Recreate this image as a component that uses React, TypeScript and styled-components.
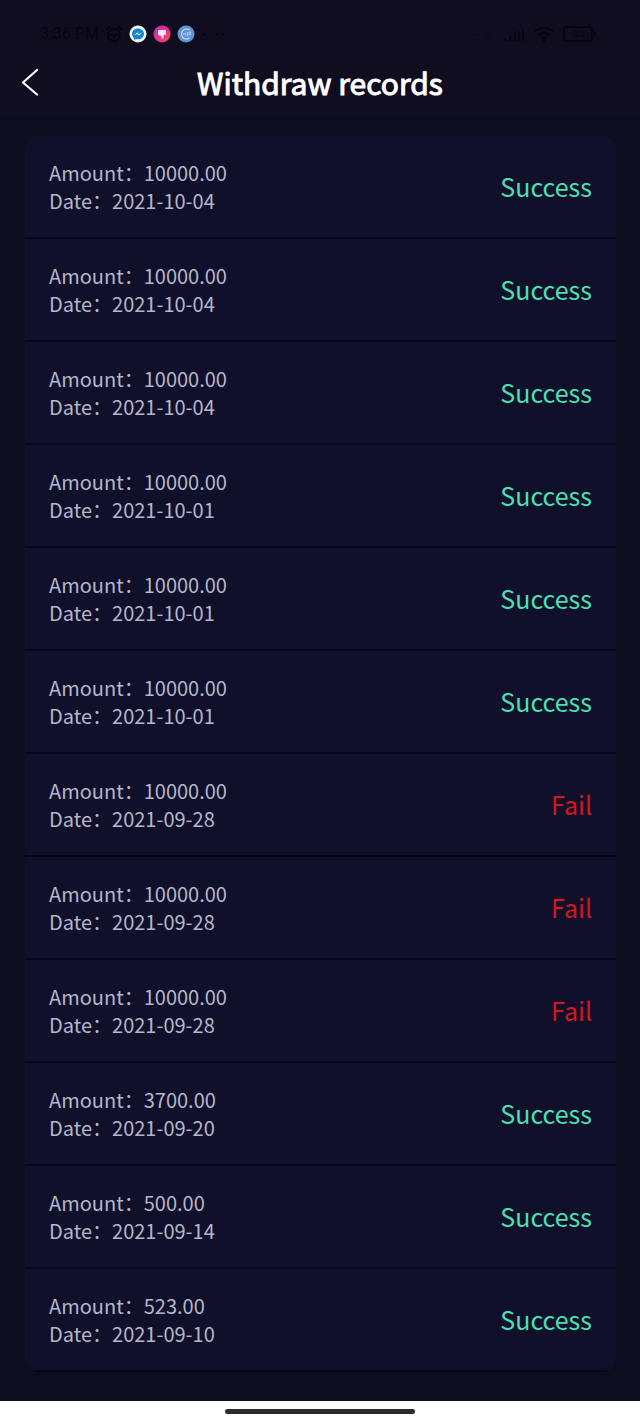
import React from "react";
import styled, { createGlobalStyle } from "styled-components";

type Status = "Success" | "Fail";

interface WithdrawRecord {
  amount: string;
  date: string;
  status: Status;
}

const records: WithdrawRecord[] = [
  { amount: "10000.00", date: "2021-10-04", status: "Success" },
  { amount: "10000.00", date: "2021-10-04", status: "Success" },
  { amount: "10000.00", date: "2021-10-04", status: "Success" },
  { amount: "10000.00", date: "2021-10-01", status: "Success" },
  { amount: "10000.00", date: "2021-10-01", status: "Success" },
  { amount: "10000.00", date: "2021-10-01", status: "Success" },
  { amount: "10000.00", date: "2021-09-28", status: "Fail" },
  { amount: "10000.00", date: "2021-09-28", status: "Fail" },
  { amount: "10000.00", date: "2021-09-28", status: "Fail" },
  { amount: "3700.00", date: "2021-09-20", status: "Success" },
  { amount: "500.00", date: "2021-09-14", status: "Success" },
  { amount: "523.00", date: "2021-09-10", status: "Success" },
];

const GlobalStyle = createGlobalStyle`
  *, *::before, *::after {
    box-sizing: border-box;
  }

  body {
    margin: 0;
    background: #0c0e20;
    font-family: "Noto Sans CJK SC", "Noto Sans", sans-serif;
  }
`;

const Page = styled.div`
  display: flex;
  flex-direction: column;
  min-height: 100vh;
`;

const TopArea = styled.header`
  background: #100d21;
`;

const StatusBar = styled.div`
  display: flex;
  align-items: center;
  justify-content: space-between;
  padding: 20px 44px 0 40px;
  height: 48px;
  color: #07050f;
`;

const StatusGroup = styled.div<{ $gap: number }>`
  display: flex;
  align-items: center;
  gap: ${(p) => p.$gap}px;
`;

const Clock = styled.span`
  font-family: Roboto, sans-serif;
  font-size: 16px;
  line-height: 20px;
`;

const TitleBar = styled.div`
  display: grid;
  grid-template-columns: 48px 1fr 48px;
  align-items: center;
  height: 68px;
  padding: 0 6px;
`;

const BackButton = styled.button`
  display: flex;
  align-items: center;
  justify-content: center;
  height: 48px;
  padding: 0;
  border: 0;
  background: none;
  color: #ffffff;
  cursor: pointer;
`;

const Title = styled.h1`
  margin: 0;
  color: #ffffff;
  font-size: 30px;
  font-weight: 400;
  line-height: 48px;
  text-align: center;
  -webkit-text-stroke: 1px #ffffff;
`;

const Content = styled.main`
  flex: 1;
  padding: 20px 24px 29px 25px;
`;

const RecordList = styled.ul`
  margin: 0;
  padding: 0;
  list-style: none;
  overflow: hidden;
  border-radius: 14px;
  background: #10102b;
`;

const RecordRow = styled.li`
  display: flex;
  align-items: center;
  justify-content: space-between;
  height: 103px;
  padding: 0 24px;
  border-bottom: 2px solid #06061a;
`;

const RecordInfo = styled.div`
  color: #b6b6ca;
  font-size: 20px;
  line-height: 28px;
`;

const RecordStatus = styled.span<{ $status: Status }>`
  padding-bottom: 2px;
  color: ${(p) => (p.$status === "Success" ? "#4be0b4" : "#d8141f")};
  font-size: 25px;
  line-height: 36px;
`;

const NavigationBar = styled.footer`
  display: flex;
  justify-content: center;
  align-items: center;
  height: 21px;
  background: #ffffff;
`;

const HomeIndicator = styled.div`
  width: 190px;
  height: 5px;
  border-radius: 3px;
  background: #2c2c2c;
`;

const AlarmIcon = () => (
  <svg width="18" height="18" viewBox="0 0 18 18" fill="none" stroke="currentColor" strokeWidth="2" aria-hidden="true">
    <circle cx="9" cy="10" r="6" />
    <path d="M1 5l4-3.500M17 5l-4-3.500M6 9l3 3 3-3" />
  </svg>
);

const MessengerIcon = () => (
  <svg width="18" height="18" viewBox="0 0 18 18" aria-hidden="true">
    <circle cx="9" cy="9" r="8.500" fill="#f4faff" />
    <path d="M9 3.500c-3.500 0-6 2.300-6 5.400 0 1.700.8 3.100 2 4.100v2l2-1c.6.2 1.300.2 2 .2 3.500 0 6-2.300 6-5.300S12.500 3.500 9 3.500z" fill="#1786d2" />
    <path d="M5 10.500l3-3 2 1.500 3-1.700-3 3.200-2-1.500z" fill="#fff" />
  </svg>
);

const PinkAppIcon = () => (
  <svg width="18" height="18" viewBox="0 0 18 18" aria-hidden="true">
    <defs>
      <linearGradient id="pinkApp" x1="0" y1="0" x2="1" y2="1">
        <stop offset="0" stopColor="#b32bc9" />
        <stop offset=".55" stopColor="#ee2f8a" />
        <stop offset="1" stopColor="#f4573f" />
      </linearGradient>
    </defs>
    <circle cx="9" cy="9" r="8.500" fill="url(#pinkApp)" />
    <path d="M5 5h8v5h-2.500v3.500h-2V11L5 10z" fill="#ffe6f5" />
  </svg>
);

const BlueAppIcon = () => (
  <svg width="18" height="18" viewBox="0 0 18 18" aria-hidden="true">
    <circle cx="9" cy="9" r="8.500" fill="#6494d6" />
    <g fill="none" stroke="#c9e0fa" strokeWidth="1.200">
      <path d="M12.500 5A5 5 0 1 0 12.500 13" />
      <path d="M6 9h3M10.500 7v4M13 6.500v4" />
    </g>
  </svg>
);

const DotsIcon = () => (
  <svg width="26" height="6" viewBox="0 0 26 6" fill="currentColor" aria-hidden="true">
    <circle cx="3" cy="3" r="1.500" />
    <circle cx="16" cy="3" r="1.500" />
    <circle cx="22" cy="3" r="1.500" />
  </svg>
);

const MutedIcon = () => (
  <svg width="22" height="16" viewBox="0 0 22 16" fill="none" stroke="#0c0a1b" strokeWidth="2" aria-hidden="true">
    <path d="M1 9h5M11 3h8M11 8h8M11 13h8" />
  </svg>
);

const SignalIcon = () => (
  <svg width="22" height="16" viewBox="0 0 22 16" fill="currentColor" aria-hidden="true">
    <path d="M1 12h2v3H1zM6 10h2v5H6zM11 7h2v8h-2zM15 5h2v10h-2zM19 3h2v12h-2z" />
  </svg>
);

const WifiIcon = () => (
  <svg width="22" height="17" viewBox="0 0 22 17" fill="none" stroke="currentColor" strokeWidth="2" aria-hidden="true">
    <path d="M1.500 6C7 .8 15 .8 20.500 6M5 9.500c3.500-3.300 8.500-3.300 12 0M8 12.500c2-1.700 4-1.700 6 0" />
    <circle cx="11" cy="14.500" r="1" fill="currentColor" />
  </svg>
);

const BatteryIcon = () => (
  <svg width="33" height="16" viewBox="0 0 33 16" fill="none" stroke="currentColor" strokeWidth="2" aria-hidden="true">
    <rect x="1" y="1" width="28" height="14" rx="3" />
    <path d="M31.500 5.500v5" />
    <path d="M11 5.500h3v5h-3zM17 5.500h3v5h-3z" strokeWidth="1" />
  </svg>
);

const BackIcon = () => (
  <svg width="18" height="28" viewBox="0 0 18 28" fill="none" stroke="currentColor" strokeWidth="2.200" strokeLinecap="round" strokeLinejoin="round" aria-hidden="true">
    <path d="M16 2L2 14.500 16 26.500" />
  </svg>
);

export default function App() {
  return (
    <>
      <GlobalStyle />
      <Page>
        <TopArea>
          <StatusBar>
            <StatusGroup $gap={6}>
              <Clock>3:36 PM</Clock>
              <AlarmIcon />
              <MessengerIcon />
              <PinkAppIcon />
              <BlueAppIcon />
              <DotsIcon />
            </StatusGroup>
            <StatusGroup $gap={8}>
              <MutedIcon />
              <SignalIcon />
              <WifiIcon />
              <BatteryIcon />
            </StatusGroup>
          </StatusBar>
          <TitleBar>
            <BackButton type="button" aria-label="Back">
              <BackIcon />
            </BackButton>
            <Title>Withdraw records</Title>
          </TitleBar>
        </TopArea>
        <Content>
          <RecordList>
            {records.map((record, index) => (
              <RecordRow key={index}>
                <RecordInfo>
                  <div>Amount：{record.amount}</div>
                  <div>Date：{record.date}</div>
                </RecordInfo>
                <RecordStatus $status={record.status}>{record.status}</RecordStatus>
              </RecordRow>
            ))}
          </RecordList>
        </Content>
        <NavigationBar>
          <HomeIndicator />
        </NavigationBar>
      </Page>
    </>
  );
}
